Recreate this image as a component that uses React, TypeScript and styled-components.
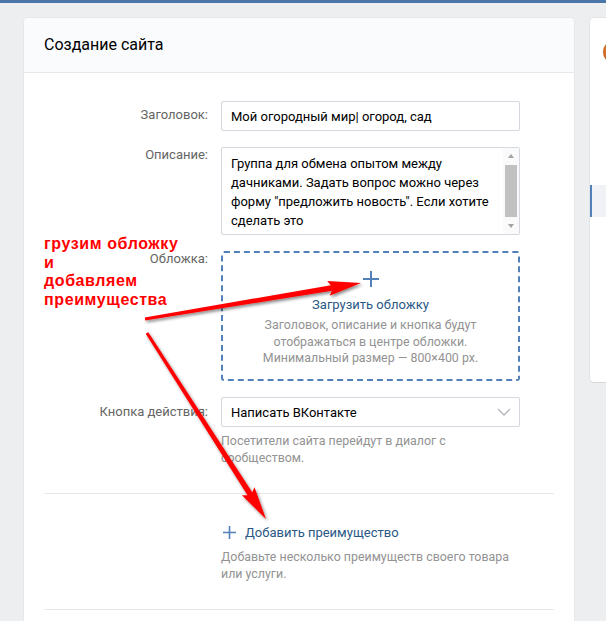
import React from 'react';
import styled, { createGlobalStyle } from 'styled-components';

const GlobalStyle = createGlobalStyle`
  html, body {
    margin: 0;
    padding: 0;
  }
  body {
    background: #edeef0;
    font-family: Roboto, 'Open Sans', 'Liberation Sans', sans-serif;
    overflow: hidden;
  }
`;

const Screen = styled.div`
  position: relative;
  width: 606px;
  height: 621px;
  overflow: hidden;
`;

const TopBar = styled.div`
  height: 3px;
  background: #4a76a8;
`;

const Columns = styled.div`
  display: flex;
  align-items: flex-start;
  gap: 16px;
  padding: 15px 0 0 24px;
`;

const MainCard = styled.section`
  width: 550px;
  flex-shrink: 0;
  min-height: 620px;
  background: #fff;
  border-radius: 4px 4px 0 0;
  box-shadow: 0 0 0 1px #e7e8ec;
`;

const CardHeader = styled.header`
  height: 55px;
  box-sizing: border-box;
  display: flex;
  align-items: center;
  padding: 0 20px 1px;
  background: #fafbfc;
  border-bottom: 1px solid #e7e8ec;
  border-radius: 4px 4px 0 0;
  font-size: 16px;
  color: #000;
`;

const FormGrid = styled.div<{ $pad: string }>`
  display: grid;
  grid-template-columns: 164px 299px;
  column-gap: 13px;
  row-gap: 16px;
  padding: ${(p) => p.$pad};
`;

const Label = styled.div<{ $top: number }>`
  padding-top: ${(p) => p.$top}px;
  text-align: right;
  font-size: 13px;
  line-height: 16px;
  color: #656565;
`;

const Field = styled.div`
  display: flex;
  flex-direction: column;
`;

const TextInput = styled.div`
  height: 30px;
  box-sizing: border-box;
  display: flex;
  align-items: center;
  padding: 0 9px;
  border: 1px solid #d3d9de;
  border-radius: 2px;
  background: #fff;
  font-size: 13px;
  color: #000;
`;

const TextArea = styled.div`
  height: 88px;
  box-sizing: border-box;
  display: flex;
  border: 1px solid #d3d9de;
  border-radius: 2px;
  background: #fff;
`;

const AreaText = styled.div`
  flex: 1;
  padding: 6px 9px 0;
  font-size: 13px;
  line-height: 19px;
  color: #000;
  overflow: hidden;
`;

const Scrollbar = styled.div`
  width: 15px;
  display: flex;
  flex-direction: column;
  align-items: center;
  padding: 0 1px 0 0;
  background: #fafafa;
`;

const ScrollArrow = styled.div<{ $down?: boolean }>`
  height: 16px;
  width: 100%;
  display: flex;
  align-items: center;
  justify-content: center;
  &::after {
    content: '';
    border-left: 3.5px solid transparent;
    border-right: 3.5px solid transparent;
    ${(p) => (p.$down ? 'border-top: 4px solid #a3a3a3;' : 'border-bottom: 4px solid #a3a3a3;')}
  }
`;

const ScrollThumb = styled.div`
  width: 12px;
  height: 52px;
  margin-top: 1px;
  background: #c1c1c1;
`;

const ScrollTrack = styled.div`
  flex: 1;
`;

const CoverDrop = styled.div`
  height: 130px;
  box-sizing: border-box;
  display: flex;
  flex-direction: column;
  align-items: center;
  padding-top: 18px;
  border: 2px dashed #5181b8;
  border-radius: 3px;
  text-align: center;
`;

const CoverTitle = styled.div`
  margin-top: 9px;
  font-size: 13px;
  line-height: 18px;
  color: #2a5885;
`;

const CoverNote = styled.div`
  margin-top: 3px;
  font-size: 12.4px;
  line-height: 16.7px;
  color: #939393;
`;

const Select = styled(TextInput)`
  justify-content: space-between;
  padding-right: 8px;
`;

const Hint = styled.div<{ $gap: number }>`
  margin-top: ${(p) => p.$gap}px;
  font-size: 12.4px;
  line-height: 17px;
  color: #939393;
  white-space: nowrap;
`;

const Divider = styled.div`
  height: 1px;
  margin: 0 20px;
  background: #e7e8ec;
`;

const AddLink = styled.div`
  display: flex;
  align-items: center;
  gap: 9px;
  padding-left: 2px;
  height: 18px;
  font-size: 13px;
  color: #2a5885;
`;

const SideCard = styled.aside`
  width: 200px;
  height: 364px;
  flex-shrink: 0;
  background: #fff;
  border-radius: 4px;
  box-shadow: 0 1px 0 0 #d7d8db, 0 0 0 1px #e3e4e8;
  display: flex;
  flex-direction: column;
`;

const SideTop = styled.div`
  height: 167px;
  padding: 22px 0 0 13px;
  box-sizing: border-box;
`;

const Avatar = styled.div`
  width: 24px;
  height: 24px;
  border-radius: 50%;
  background: radial-gradient(circle at 40% 40%, #f0a040, #c2561c 60%, #6a7a3a);
`;

const SideItem = styled.div<{ $active?: boolean }>`
  height: 32px;
  border-left: 2px solid ${(p) => (p.$active ? '#5181b8' : 'transparent')};
  background: ${(p) => (p.$active ? '#f0f2f5' : 'transparent')};
`;

const Annotation = styled.div`
  position: absolute;
  left: 44px;
  top: 235px;
  font-family: 'Liberation Sans', Arial, sans-serif;
  font-weight: bold;
  font-size: 16px;
  line-height: 18.5px;
  letter-spacing: 0.6px;
  color: #f00;
`;

const ArrowLayer = styled.svg`
  position: absolute;
  left: 0;
  top: 0;
  pointer-events: none;
`;

const PlusIcon = ({ size, stroke }: { size: number; stroke: number }) => (
  <svg width={size} height={size} viewBox={`0 0 ${size} ${size}`}>
    <path
      d={`M${size / 2} 0V${size}M0 ${size / 2}H${size}`}
      stroke="#5181b8"
      strokeWidth={stroke}
      fill="none"
    />
  </svg>
);

const Chevron = () => (
  <svg width="14" height="8" viewBox="0 0 14 8">
    <path d="M1 1l6 6 6-6" stroke="#b2b6bb" strokeWidth="1.3" fill="none" />
  </svg>
);

// builds a tapered arrow polygon from tail to tip
function arrowPoints(x1: number, y1: number, x2: number, y2: number) {
  const len = Math.hypot(x2 - x1, y2 - y1);
  const ux = (x2 - x1) / len;
  const uy = (y2 - y1) / len;
  const nx = -uy;
  const ny = ux;
  const headLen = 30;
  const headHalf = 7.5;
  const tailW = 1.5;
  const neckW = 2.8;
  const bx = x2 - ux * headLen;
  const by = y2 - uy * headLen;
  const rx = x2 - ux * (headLen + 3);
  const ry = y2 - uy * (headLen + 3);
  const pts = [
    [x1 + nx * tailW, y1 + ny * tailW],
    [bx + nx * neckW, by + ny * neckW],
    [rx + nx * headHalf, ry + ny * headHalf],
    [x2, y2],
    [rx - nx * headHalf, ry - ny * headHalf],
    [bx - nx * neckW, by - ny * neckW],
    [x1 - nx * tailW, y1 - ny * tailW],
  ];
  return pts.map((p) => p.map((v) => v.toFixed(1)).join(',')).join(' ');
}

export default function App() {
  return (
    <Screen>
      <GlobalStyle />
      <TopBar />
      <Columns>
        <MainCard>
          <CardHeader>Создание сайта</CardHeader>
          <FormGrid $pad="28px 20px 27px">
            <Label $top={6}>Заголовок:</Label>
            <TextInput>Мой огородный мир| огород, сад</TextInput>

            <Label $top={0}>Описание:</Label>
            <TextArea>
              <AreaText>
                Группа для обмена опытом между дачниками. Задать вопрос можно через форму
                "предложить новость". Если хотите сделать это
              </AreaText>
              <Scrollbar>
                <ScrollArrow />
                <ScrollThumb />
                <ScrollTrack />
                <ScrollArrow $down />
              </Scrollbar>
            </TextArea>

            <Label $top={0}>Обложка:</Label>
            <CoverDrop>
              <PlusIcon size={16} stroke={2} />
              <CoverTitle>Загрузить обложку</CoverTitle>
              <CoverNote>
                Заголовок, описание и кнопка будут
                <br />
                отображаться в центре обложки.
                <br />
                Минимальный размер — 800×400 px.
              </CoverNote>
            </CoverDrop>

            <Label $top={7}>Кнопка действия:</Label>
            <Field>
              <Select>
                Написать ВКонтакте
                <Chevron />
              </Select>
              <Hint $gap={5}>
                Посетители сайта перейдут в диалог с
                <br />
                сообществом.
              </Hint>
            </Field>
          </FormGrid>
          <Divider />
          <FormGrid $pad="29px 20px 27px">
            <div />
            <Field>
              <AddLink>
                <PlusIcon size={13} stroke={1.6} />
                Добавить преимущество
              </AddLink>
              <Hint $gap={7}>
                Добавьте несколько преимуществ своего товара
                <br />
                или услуги.
              </Hint>
            </Field>
          </FormGrid>
          <Divider />
        </MainCard>
        <SideCard>
          <SideTop>
            <Avatar />
          </SideTop>
          <SideItem $active />
        </SideCard>
      </Columns>

      <Annotation>
        грузим обложку
        <br />
        и
        <br />
        добавляем
        <br />
        преимущества
      </Annotation>

      <ArrowLayer width="606" height="621" viewBox="0 0 606 621">
        <defs>
          <filter id="arrowShadow" x="-20%" y="-20%" width="140%" height="140%">
            <feDropShadow dx="1.5" dy="2" stdDeviation="1.5" floodColor="#000" floodOpacity="0.45" />
          </filter>
        </defs>
        <g fill="#f00" filter="url(#arrowShadow)">
          <polygon points={arrowPoints(145, 319, 361, 283)} />
          <polygon points={arrowPoints(147, 333, 266, 519)} />
        </g>
      </ArrowLayer>
    </Screen>
  );
}
